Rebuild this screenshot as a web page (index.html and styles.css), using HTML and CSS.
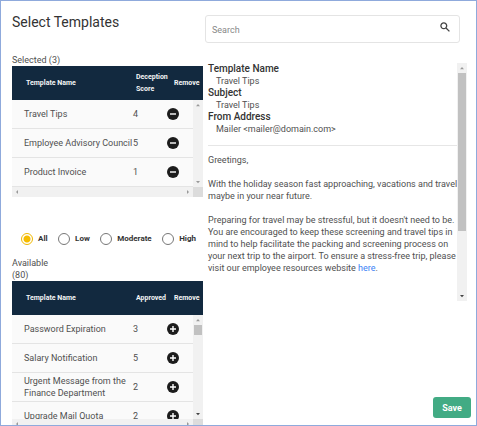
FILE: index.html
```html
<!DOCTYPE html>
<html lang="en">
<head>
<meta charset="utf-8">
<title>Select Templates</title>
<link rel="stylesheet" href="styles.css">
</head>
<body>
<svg class="defs" aria-hidden="true">
  <symbol id="minus" viewBox="0 0 12 12"><circle cx="6" cy="6" r="6" fill="#1c1c1c"/><path d="M3 6h6" stroke="#fff" stroke-width="1.4"/></symbol>
  <symbol id="plus" viewBox="0 0 12 12"><circle cx="6" cy="6" r="6" fill="#1c1c1c"/><path d="M3 6h6M6 3v6" stroke="#fff" stroke-width="1.4"/></symbol>
  <symbol id="up" viewBox="0 0 10 10"><path d="M3 6.200L5 4l2 2.200z"/></symbol>
  <symbol id="down" viewBox="0 0 10 10"><path d="M3 4l2 2.200L7 4z"/></symbol>
  <symbol id="left" viewBox="0 0 10 10"><path d="M6 3L4 5l2 2z"/></symbol>
  <symbol id="right" viewBox="0 0 10 10"><path d="M4 3l2 2-2 2z"/></symbol>
</svg>
<main class="page">
  <section class="lists">
    <h1>Select Templates</h1>
    <p class="caption">Selected (3)</p>
    <div class="panel">
      <table>
        <colgroup><col class="col-name"><col class="col-score"><col></colgroup>
        <thead><tr><th>Template Name</th><th>Deception<br>Score</th><th>Remove</th></tr></thead>
        <tbody>
          <tr><td>Travel Tips</td><td>4</td><td><button class="icon" aria-label="Remove Travel Tips"><svg><use href="#minus"/></svg></button></td></tr>
          <tr><td>Employee Advisory Council</td><td>5</td><td><button class="icon" aria-label="Remove Employee Advisory Council"><svg><use href="#minus"/></svg></button></td></tr>
          <tr><td>Product Invoice</td><td>1</td><td><button class="icon" aria-label="Remove Product Invoice"><svg><use href="#minus"/></svg></button></td></tr>
        </tbody>
      </table>
      <div class="vbar over"><svg><use href="#up"/></svg><svg><use href="#down"/></svg></div>
    </div>
    <div class="hbar"><svg><use href="#left"/></svg><svg><use href="#right"/></svg><span class="corner"></span></div>

    <div class="filters" role="radiogroup" aria-label="Deception level">
      <label><input type="radio" name="level" checked>All</label>
      <label><input type="radio" name="level">Low</label>
      <label><input type="radio" name="level">Moderate</label>
      <label><input type="radio" name="level">High</label>
    </div>

    <p class="caption">Available<br>(80)</p>
    <div class="panel available">
      <table>
        <colgroup><col class="col-name"><col class="col-score"><col></colgroup>
        <thead><tr><th>Template Name</th><th>Approved</th><th>Remove</th></tr></thead>
        <tbody>
          <tr><td>Password Expiration</td><td>3</td><td><button class="icon" aria-label="Add Password Expiration"><svg><use href="#plus"/></svg></button></td></tr>
          <tr><td>Salary Notification</td><td>5</td><td><button class="icon" aria-label="Add Salary Notification"><svg><use href="#plus"/></svg></button></td></tr>
          <tr><td>Urgent Message from the<br>Finance Department</td><td>2</td><td><button class="icon" aria-label="Add Urgent Message"><svg><use href="#plus"/></svg></button></td></tr>
          <tr><td>Upgrade Mail Quota</td><td>2</td><td><button class="icon" aria-label="Add Upgrade Mail Quota"><svg><use href="#plus"/></svg></button></td></tr>
        </tbody>
      </table>
      <div class="vbar over"><svg><use href="#up"/></svg><span class="thumb short"></span><svg class="dark"><use href="#down"/></svg></div>
    </div>
    <div class="hbar"><svg><use href="#left"/></svg><svg><use href="#right"/></svg><span class="corner"></span></div>
  </section>

  <section class="details">
    <div class="search">
      <input type="text" placeholder="Search" aria-label="Search">
      <svg viewBox="0 0 10 10" aria-hidden="true"><circle cx="3.800" cy="3.800" r="2.900"/><path d="M6 6l3.400 3.400"/></svg>
    </div>
    <div class="preview">
      <article>
        <dl>
          <dt>Template Name</dt><dd>Travel Tips</dd>
          <dt>Subject</dt><dd>Travel Tips</dd>
          <dt>From Address</dt><dd>Mailer &lt;mailer@domain.com&gt;</dd>
        </dl>
        <div class="message">
          <p>Greetings,</p>
          <p>With the holiday season fast approaching, vacations and travel<br>maybe in your near future.</p>
          <p>Preparing for travel may be stressful, but it doesn't need to be.<br>You are encouraged to keep these screening and travel tips in<br>mind to help facilitate the packing and screening process on<br>your next trip to the airport. To ensure a stress-free trip, please<br>visit our employee resources website <a href="#">here</a>.</p>
        </div>
      </article>
      <div class="vbar"><svg><use href="#up"/></svg><span class="thumb"></span><svg class="dark"><use href="#down"/></svg></div>
    </div>
    <button class="save">Save</button>
  </section>
</main>
</body>
</html>
```
FILE: styles.css
```css
* { box-sizing: border-box; margin: 0; padding: 0; }

body {
  font: 9px/12px Roboto, "Liberation Sans", sans-serif;
  color: #505050;
  background: #fff;
}

button, input { font: inherit; color: inherit; border: 0; background: none; }
svg { display: block; }
.defs { position: absolute; width: 0; height: 0; }

.page {
  display: grid;
  grid-template-columns: minmax(0, 202fr) minmax(0, 273fr);
  grid-template-rows: 100%;
  height: 100vh;
  overflow: hidden;
  border: 1px solid #8faadc;
}

.lists { padding: 11px 0 0 11px; }

h1 {
  font-size: 14px;
  line-height: 20px;
  font-weight: 400;
  color: #333;
  margin-bottom: 22px;
}

.panel { position: relative; overflow: hidden; }
.available { height: 138px; }

table {
  width: 100%;
  table-layout: fixed;
  border-collapse: separate;
  border-spacing: 0;
  background: #fafafa;
}
.col-name { width: 121px; }
.col-score { width: 32px; }

th {
  height: 34px;
  padding-left: 3px;
  background: #12293f;
  color: #f4f5f6;
  font-size: 7px;
  font-weight: 700;
  text-align: left;
  white-space: nowrap;
}
td {
  height: 29px;
  border-bottom: 1px solid #e4e4e4;
  white-space: nowrap;
}
th:first-child { padding-left: 14px; }
td:first-child { padding-left: 12px; }
th:last-child { padding-left: 9px; }
td:last-child { padding-left: 2px; }

.icon { display: block; width: 12px; height: 12px; }
.icon svg { width: 12px; height: 12px; }

.vbar {
  display: flex;
  flex-direction: column;
  align-items: center;
  justify-content: space-between;
  width: 10px;
  background: #f1f1f1;
}
.vbar svg, .hbar svg { width: 10px; height: 10px; fill: #999; flex: none; }
.vbar .dark { fill: #444; }
.over { position: absolute; top: 34px; right: 0; bottom: 0; }
.thumb { width: 8px; height: 158px; margin-bottom: auto; background: #c1c1c1; }
.short { height: 10px; }

.hbar { display: flex; height: 10px; background: #f1f1f1; }
.hbar svg + svg { margin-left: auto; }
.corner { width: 10px; background: #dcdcdc; }

.filters {
  display: flex;
  justify-content: space-between;
  margin: 36px 7px 12px 9px;
}
.filters label {
  display: flex;
  align-items: center;
  gap: 5px;
  font-size: 8px;
  font-weight: 700;
  color: #333;
}
.filters input {
  appearance: none;
  width: 12px;
  height: 12px;
  border: 1px solid #777;
  border-radius: 50%;
}
.filters input:checked {
  border-color: #f0b800;
  background: radial-gradient(circle, #f5bc00 3px, #fff 4px);
}

.details {
  display: flex;
  flex-direction: column;
  padding: 14px 5px 7px 2px;
}

.search {
  display: flex;
  align-items: center;
  height: 28px;
  margin-right: 11px;
  padding: 0 9px 0 6px;
  border: 1px solid #e4e4e4;
  border-radius: 3px;
}
.search input { flex: 1; min-width: 0; outline: 0; padding-top: 2px; }
.search input::placeholder { color: #888; opacity: 1; }
.search svg {
  width: 10px;
  height: 10px;
  margin-bottom: 4px;
  fill: none;
  stroke: #444;
  stroke-width: 1.3;
}

.preview {
  display: flex;
  height: 238px;
  margin: 20px 4px 0 3px;
}
article { flex: 1; min-width: 0; white-space: nowrap; }
dl { padding-bottom: 10px; border-bottom: 1px solid #e6e6e6; }
dt { font-size: 10px; font-weight: 500; color: #333; }
dd { padding-left: 8px; }
.message { padding-top: 8px; }
.message p { margin-bottom: 12px; }
.message a { color: #3b82f6; text-decoration: none; }

.save {
  align-self: flex-end;
  width: 38px;
  height: 21px;
  margin-top: auto;
  border-radius: 3px;
  background: #42ab84;
  color: #fff;
  font-weight: 700;
}
```
